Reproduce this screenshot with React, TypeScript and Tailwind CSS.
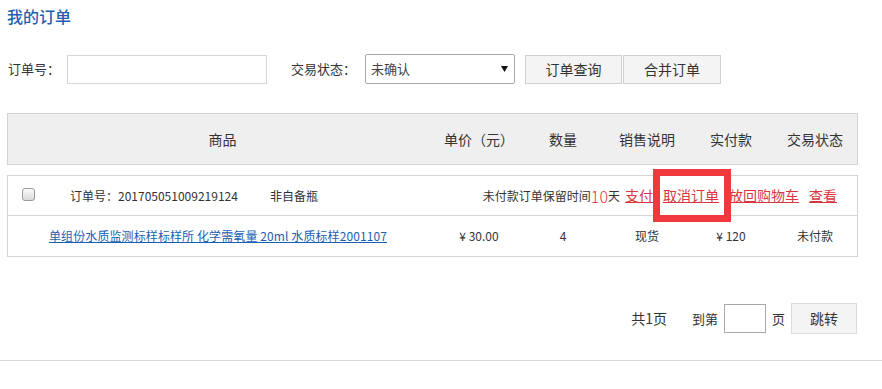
import React from "react";

const font = { fontFamily: '"Microsoft YaHei", "Noto Sans CJK SC", "Noto Sans", sans-serif' };

export default function App() {
  return (
    <div className="relative w-[882px] h-[389px] bg-white overflow-hidden text-[#333]" style={font}>
      <div className="pt-[8px] pl-[7px] text-[16px] leading-[16px] font-medium text-[#1f5fae]">我的订单</div>

      {/* search row */}
      <div className="mt-[30px] flex items-center h-[30px]">
        <div className="w-[67px] pl-[8px] text-[13px] leading-[30px]">订单号：</div>
        <div className="w-[200px] h-[29px] border border-[#d6d6d6] bg-white" />
        <div className="ml-[24px] w-[74px] text-[13px] leading-[30px]">交易状态：</div>
        <div className="w-[150px] h-[30px] border border-[#a9a9a9] rounded-[2px] flex items-center justify-between pl-[5px] pr-[6px]">
          <span className="text-[13px] text-[#444]">未确认</span>
          <svg width="7" height="6" viewBox="0 0 7 6">
            <polygon points="0,0 7,0 3.5,6" fill="#111" />
          </svg>
        </div>
        <div className="ml-[10px] w-[97px] h-[29px] border border-[#cfcfcf] bg-[#f4f4f4] flex items-center justify-center text-[14px]">订单查询</div>
        <div className="ml-[1px] w-[98px] h-[29px] border border-[#cfcfcf] bg-[#f4f4f4] flex items-center justify-center text-[14px]">合并订单</div>
      </div>

      {/* table header */}
      <div className="mt-[29px] ml-[7px] w-[851px] h-[52px] border border-[#d3d3d3] bg-[#efefef] grid grid-cols-[429px_84px_84px_84px_84px_84px] items-center text-[14px]">
        <div className="text-center">商品</div>
        <div className="text-center">单价（元）</div>
        <div className="text-center">数量</div>
        <div className="text-center">销售说明</div>
        <div className="text-center">实付款</div>
        <div className="text-center">交易状态</div>
      </div>

      {/* order box */}
      <div className="mt-[10px] ml-[7px] w-[851px] border border-[#d5d5d5] text-[12px]">
        <div className="h-[40px] flex items-center border-b border-[#d5d5d5]">
          <span className="ml-[14px] mb-[3px] w-[13px] h-[13px] rounded-[3px] border border-[#9a9a9a] bg-gradient-to-b from-[#fbfbfb] to-[#dadada]" />
          <span className="ml-[35px] w-[200px]">订单号：201705051009219124</span>
          <span>非自备瓶</span>
          <div className="ml-auto mr-[20px] flex items-center">
            <span>未付款订单保留时间</span>
            <span className="text-[16px] leading-[16px] font-light text-[#e0333a]">10</span>
            <span>天</span>
            <a className="ml-[5px] text-[#d9363e] underline text-[14px]">支付</a>
            <a className="ml-[10px] text-[#d9363e] underline text-[14px]">取消订单</a>
            <a className="ml-[10px] text-[#d9363e] underline text-[14px]">放回购物车</a>
            <a className="ml-[10px] text-[#d9363e] underline text-[14px]">查看</a>
          </div>
        </div>
        <div className="h-[40px] grid grid-cols-[429px_84px_84px_84px_84px_84px] items-center">
          <a className="pl-[41px] text-[#1a5fb4] underline whitespace-nowrap tracking-[0.1px]">单组份水质监测标样标样所 化学需氧量 20ml 水质标样2001107</a>
          <div className="text-center">¥ 30.00</div>
          <div className="text-center">4</div>
          <div className="text-center">现货</div>
          <div className="text-center">¥ 120</div>
          <div className="text-center">未付款</div>
        </div>
      </div>

      {/* pagination */}
      <div className="mt-[46px] flex items-center justify-end pr-[25px] h-[31px]">
        <span className="text-[14px]">共1页</span>
        <span className="ml-[25px] text-[13px]">到第</span>
        <div className="ml-[6px] w-[42px] h-[29px] border border-[#a9a9a9] bg-white" />
        <span className="ml-[6px] text-[13px]">页</span>
        <div className="ml-[6px] w-[66px] h-[31px] border border-[#dcdcdc] bg-[#f4f4f4] flex items-center justify-center text-[14px]">跳转</div>
      </div>

      <div className="mt-[26px] h-px bg-[#d9d9d9]" />

      {/* red annotation box */}
      <div className="absolute left-[653px] top-[169px] w-[78px] h-[53px] border-[7px] border-[#f0393c]" />
    </div>
  );
}
